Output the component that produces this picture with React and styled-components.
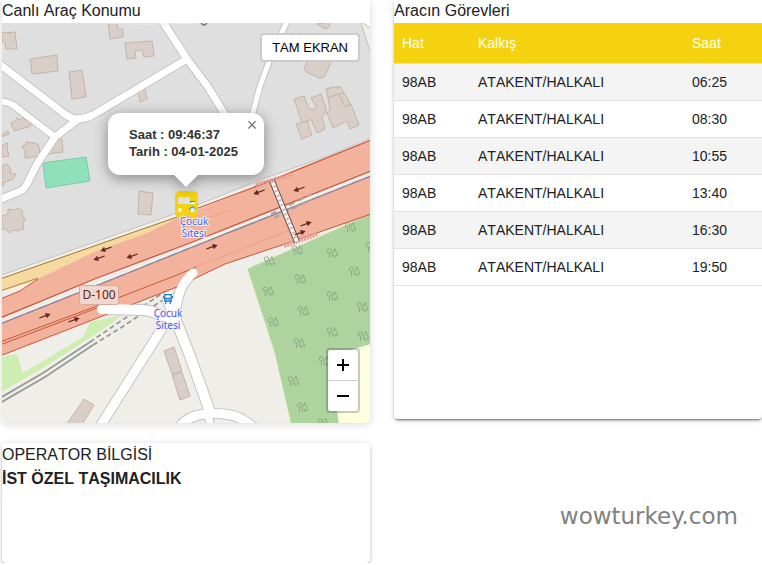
import React, { useState } from "react";
import styled, { createGlobalStyle } from "styled-components";

const GlobalStyle = createGlobalStyle`
  * { box-sizing: border-box; }
  body {
    margin: 0;
    background: #fff;
    color: #212121;
    font-family: "Liberation Sans", Arial, sans-serif;
    font-size: 16px;
  }
`;

const Page = styled.main`
  display: grid;
  grid-template-columns: 1fr 1fr;
  column-gap: 24px;
  padding-left: 2px;
  align-items: start;
`;

const Column = styled.div`
  display: flex;
  flex-direction: column;
  gap: 20px;
  min-width: 0;
`;

const Card = styled.section`
  background: #fff;
  border-radius: ${(p) => (p.$top ? "0 0 4px 4px" : "4px")};
  min-height: ${(p) => p.$minHeight || "auto"};
  box-shadow: ${(p) =>
    p.$soft
      ? "0 1px 8px rgba(0, 0, 0, 0.16)"
      : "0 3px 1px -2px rgba(0, 0, 0, 0.25), 0 2px 2px rgba(0, 0, 0, 0.2), 0 1px 6px rgba(0, 0, 0, 0.16)"};
`;

const CardTitle = styled.h2`
  margin: 0;
  padding-bottom: ${(p) => (p.$tall ? "0" : "2px")};
  font-size: 16px;
  font-weight: 400;
  line-height: ${(p) => (p.$tall ? "24px" : "21px")};
  font-kerning: none;
`;

const OperatorName = styled.p`
  margin: 0;
  font-weight: 700;
  line-height: 24px;
  font-kerning: none;
`;

const MapFrame = styled.div`
  position: relative;
  height: 400px;
  overflow: hidden;
  border-radius: 0 0 4px 4px;
  background: #f0eee9;
`;

const MapSvg = styled.svg`
  display: block;
  width: 100%;
  height: 100%;
`;

const FullscreenButton = styled.button`
  position: absolute;
  top: 10px;
  right: 10px;
  padding: 0 10px;
  height: 29px;
  border: 2px solid #ccc;
  border-radius: 4px;
  background: #fff;
  background-clip: padding-box;
  color: #000;
  font: 13px "Liberation Sans", Arial, sans-serif;
  font-kerning: none;
  cursor: pointer;
`;

const ZoomBar = styled.div`
  position: absolute;
  right: 10px;
  bottom: 10px;
  width: 34px;
  border: 2px solid rgba(0, 0, 0, 0.2);
  border-radius: 4px;
  background: #fff;
  background-clip: padding-box;
`;

const ZoomButton = styled.button`
  display: grid;
  place-items: center;
  width: 100%;
  height: ${(p) => (p.$divided ? "31px" : "30px")};
  padding: 0;
  border: 0;
  border-bottom: ${(p) => (p.$divided ? "1px solid #ccc" : "0")};
  background: none;
  color: #000;
  cursor: pointer;
`;

const Popup = styled.div`
  position: absolute;
  left: 50%;
  top: 90px;
  transform: translateX(-50%);
  filter: drop-shadow(0 3px 7px rgba(0, 0, 0, 0.4));
  display: flex;
  flex-direction: column;
  align-items: center;
`;

const PopupBody = styled.div`
  width: 156px;
  padding: 13px 20px 15px 21px;
  border-radius: 12px;
  background: #fff;
  color: #333;
  font-size: 13px;
  font-weight: 700;
  line-height: 17px;
  white-space: nowrap;
`;

const PopupTip = styled.div`
  width: 24px;
  height: 12px;
  background: #fff;
  clip-path: polygon(0 0, 100% 0, 50% 100%);
`;

const CloseButton = styled.button`
  position: absolute;
  top: 0;
  right: 0;
  width: 24px;
  height: 24px;
  padding: 0;
  border: 0;
  background: none;
  color: #757575;
  font: 18px/24px "Liberation Sans", Arial, sans-serif;
  cursor: pointer;
`;

const TaskTable = styled.table`
  width: 100%;
  border-collapse: separate;
  border-spacing: 0;
  table-layout: fixed;
  font-size: 14px;
  font-kerning: none;
`;

const HeadCell = styled.th`
  width: ${(p) => p.$width};
  height: 41px;
  padding: 0 8px;
  background: #f5d20f;
  background-clip: padding-box;
  border-bottom: 1px solid #e0e0e0;
  color: #fff;
  font-weight: 400;
  text-align: left;
`;

const TaskRow = styled.tr`
  &:nth-child(odd) { background: #f4f4f4; }
`;

const Cell = styled.td`
  height: 37px;
  padding: 0 8px;
  border-bottom: 1px solid #e0e0e0;
`;

const Watermark = styled.p`
  margin: 61px 24px 0 0;
  align-self: flex-end;
  color: #808080;
  font: 23px/32px "DejaVu Sans", Verdana, sans-serif;
`;

const roads = [
  { w: 7, d: "M-4 61L2 66L62 112Q70 119 77 119Q85 119 93 115L187 59L163 22M187 59L208 87L227 118" },
  { w: 6, d: "M-2 101Q8 102 13 105L55 137" },
  { w: 7, d: "M77 120L55 137L37 164L27 184Q24 190 18 192L-2 200" },
  { w: 5, d: "M287 22L273 51L260 86L252 116" },
  { w: 6, d: "M365 20L372 25" },
  { w: 10, d: "M102 309L143 310Q158 311 170 322" },
  { w: 9, d: "M193 273Q181 284 178 298Q176 315 163 327L99 428" },
  { w: 10, d: "M168 300L190 356L210 412" },
  { w: 9, d: "M178 430Q184 417 204 414Q228 412 242 419L258 430" },
  { w: 7, d: "M207 412L212 430" },
];

const buildings = [
  "M2 33L15 32L17 49L6 49L5 42L2 42Z",
  "M30 59L57 55L58 71L32 74Z",
  "M69 72L82 70L86 97L72 99Z",
  "M108 22L117 22L118 29L123 29L123 37L110 39Z",
  "M125 43L152 41L154 56L144 57L142 50L135 51L136 58L127 59Z",
  "M138 91L145 89L147 99L140 102Z",
  "M11 123L17 120L17 117L20 120L23 117L25 120L29 119L31 126L14 131Z",
  "M2 134L8 131L9 134L2 137Z",
  "M2 145L8 143L7 148L9 156L2 157Z",
  "M22 146L26 145L26 142L36 143L39 146L40 156L25 158L25 151Z",
  "M48 143L62 139L63 152L48 154Z",
  "M2 166L7 164L11 169L10 173L16 174L13 179L5 182L3 186L2 186Z",
  "M2 216L8 214L8 209L15 210L18 208L23 211L22 215L25 219L23 224L24 229L17 231L12 230L10 233L5 229L2 229Z",
  "M139 191L153 193L151 215L138 214Z",
  "M317 24L330 22L329 27L325 29Z",
  "M308 60L332 60L325 76Q323 79 319 78L308 73Q303 70 305 67Z",
  "M294 99L304 96L309 109L315 109L316 106L311 98L321 94L326 108L326 113L322 117L325 129L317 133L311 119L308 122L302 123Z",
  "M296 124L307 121L312 135L302 139Z",
  "M326 89Q333 86 341 87L344 93L328 98Z",
  "M328 98L339 94L345 107L351 104L359 125L350 129L347 121L333 128L327 113L330 109Z",
  "M339 94L344 93Q348 98 350 104L345 107Z",
  "M164 351L174 347L182 371L172 374Z",
  "M172 375L182 372L190 396L180 400Z",
  "M84 399L94 405L82 425L66 425Z",
];

const trees = [
  [268, 291], [300, 279], [332, 296], [362, 307], [303, 311], [273, 322], [332, 332],
  [363, 336], [299, 343], [324, 361], [293, 381], [302, 407], [323, 423],
  [269, 261], [297, 250], [332, 253], [350, 227], [354, 271], [371, 247],
];

const arrows = [
  [106, 249, 160], [99, 258, 160], [132, 256, 160], [259, 192, 160], [299, 189, 160],
  [212, 247, -20], [306, 224, -20], [300, 233, -20], [45, 316, -20], [74, 320, -20],
];

function MapDrawing() {
  return (
    <MapSvg viewBox="2 23 368 400" preserveAspectRatio="xMidYMid slice" role="img" aria-label="Harita">
      <path d="M-4 18H376V136L325 157L265 178L177 213L-4 277Z" fill="#dfdfdf" stroke="#c3c3c3" />
      <path d="M360 20H376V70Z" fill="#efede6" stroke="#c0c0b8" />
      <path d="M43 163L86 157L90 181L46 188Z" fill="#8fe0bb" stroke="#74cfa4" />
      <path d="M-2 358L17 354L23 373L83 337L90 322L122 315L108 326L43 368L-2 394Z" fill="#cdeeb0" />
      <path d="M248 269L374 213V426H292L275 352Z" fill="#add49f" stroke="#b9d98f" />
      <path d="M374 343L350 350L332 366L339 426H374Z" fill="#fdfddf" />

      <g fill="none" stroke="#8b9f81" strokeWidth="1">
        {trees.map(([x, y]) => (
          <g key={`${x}-${y}`} opacity="0.8" transform={`translate(${x - 5} ${y - 5})`}>
            <circle cx="2.5" cy="3" r="2.2" />
            <path d="M2.5 5V10M7.8 0.5L4.8 8H10.8ZM7.8 8V10" />
          </g>
        ))}
      </g>

      <g fill="#d9cfc8" stroke="#c4b4a8" strokeWidth="1">
        {buildings.map((d) => <path key={d} d={d} />)}
      </g>

      <g fill="none" stroke="#999" strokeWidth="1.8">
        <path d="M0 398L43 373L90 342M0 403L45 377L93 345" />
        <path d="M90 342L118 323L176 284M93 345L122 327L178 290" strokeDasharray="5 3" />
      </g>

      <g fill="none" stroke="#c4c4c4" strokeLinecap="round" strokeLinejoin="round">
        {roads.map((r) => <path key={r.d} d={r.d} strokeWidth={r.w + 2} />)}
      </g>

      <path d="M0 279L177 217L178 222L38 280L0 292Z" fill="#f6d9a1" />
      <path d="M0 279L177 217" stroke="#9d7a26" fill="none" />
      <path d="M0 291L38 278" stroke="#a98b3a" fill="none" />
      <path d="M0 299L20 291L38 279L92 253L150 232L177 218L252 188L371 140V171L190 243L97 278L0 318Z" fill="#f3b29c" />
      <path d="M0 324L123 275L185 250L371 176V215L225 264L177 287L100 317L0 356Z" fill="#f3b29c" />
      <g fill="none" stroke="#c9563b" strokeWidth="1.3">
        <path d="M177 216L252 188L371 140" />
        <path d="M0 299L20 291L38 279" strokeWidth="1" />
        <path d="M0 318L97 278L190 243L371 171" />
        <path d="M0 356L100 317L177 287L225 264L288 243L371 214" strokeWidth="1" />
        <path d="M0 342L97 306L177 275L196 267" strokeWidth="1" />
        <path d="M0 345L97 308" strokeWidth="1" />
        <path d="M196 267L290 230" strokeWidth="1" opacity="0.2" />
        <path d="M190 225L230 210" strokeWidth="1" opacity="0.2" />
      </g>
      <path d="M0 324L123 275L185 250L371 176" fill="none" stroke="#9c7480" strokeWidth="1.2" />
      <path d="M0 324L123 275L185 250L371 176" fill="none" stroke="#8e8dab" strokeWidth="1.4" strokeDasharray="8 6" />
      <path d="M271 214L312 194M274 218L310 200" stroke="#aaa49f" strokeWidth="2" strokeDasharray="6 4" />

      <g fill="none" stroke="#fff" strokeLinecap="round" strokeLinejoin="round">
        {roads.map((r) => <path key={r.d} d={r.d} strokeWidth={r.w} />)}
      </g>

      <g fill="none">
        <path d="M256 185L293 174M284 246L318 234" stroke="#ee9a91" strokeWidth="4" strokeDasharray="2 1" />
        <path d="M272 181L297 242" stroke="#5c5553" strokeWidth="6" />
        <path d="M272 181L297 242" stroke="#fff" strokeWidth="4" />
        <path d="M272 181L297 242" stroke="#e9a9a0" strokeWidth="3" strokeDasharray="2 3" />
      </g>

      {arrows.map(([x, y, a]) => (
        <path key={`${x}-${y}`} transform={`translate(${x} ${y}) rotate(${a})`}
          d="M-6 -0.6H1V-2.8L6 0L1 2.8V0.6H-6Z" fill="#602a20" />
      ))}

      <rect x="79.500" y="285.500" width="39" height="19" rx="2" fill="#f0d6cd" stroke="#d5a99c" />
      <text x="99" y="299" textAnchor="middle" fontFamily="Noto Sans, sans-serif" fontSize="12" fill="#5e241b">D-100</text>

      <path d="M100 23Q150 26 200 23" stroke="#e8e8e8" strokeWidth="1" fill="none" />
      <path d="M201 23Q204 27 207 23" stroke="#777" strokeWidth="1.3" fill="none" />

      <g fill="none" stroke="#1f7fd4" strokeWidth="1.3">
        <path d="M164.700 301V294.700H171.300V301ZM164.700 298.500H171.300M165.800 301V304M170.200 301V304" />
        <path d="M163.500 296V298M172.500 296V298" strokeWidth="1" />
        <path d="M166 299.800H170" strokeWidth="1" strokeDasharray="1 2" />
      </g>

      <path fill="#f5d20f" d="M180 191H193Q198 191 198 197V215H195V219H191V215H182V218H178V215H175V197Q175 191 180 191Z" />
      <path fill="#e3e1da" d="M178 197H190V204H178Z" />
      <path fill="#fff" d="M190 201H195V204H190Z" />
      <path fill="#2d89c7" d="M190 201H195V202H191V203H190Z" />
      <circle cx="180" cy="210" r="2" fill="#f3efe3" />
      <circle cx="192.500" cy="210" r="2.500" fill="#dceaf0" />
      <path d="M190 210A2.500 2.500 0 0 1 195 209" stroke="#2d89c7" fill="none" />

      <g fontFamily="Noto Sans, sans-serif" fontSize="10" textAnchor="middle" fill="#4b63e0"
        stroke="#f5eff2" strokeWidth="2" strokeLinejoin="round" paintOrder="stroke">
        <text><tspan x="194" y="225">Çocuk</tspan><tspan x="194" dy="12">Sitesi</tspan></text>
        <text><tspan x="168" y="317">Çocuk</tspan><tspan x="168" dy="12">Sitesi</tspan></text>
      </g>
    </MapSvg>
  );
}

const tasks = ["06:25", "08:30", "10:55", "13:40", "16:30", "19:50"];

export default function App() {
  const [popupOpen, setPopupOpen] = useState(true);
  return (
    <>
      <GlobalStyle />
      <Page>
        <Column>
          <Card $top $soft>
            <CardTitle>Canlı Araç Konumu</CardTitle>
            <MapFrame>
              <MapDrawing />
              {popupOpen && (
                <Popup>
                  <PopupBody>
                    <div>Saat : 09:46:37</div>
                    <div>Tarih : 04-01-2025</div>
                  </PopupBody>
                  <PopupTip />
                  <CloseButton aria-label="Kapat" onClick={() => setPopupOpen(false)}>×</CloseButton>
                </Popup>
              )}
              <FullscreenButton>TAM EKRAN</FullscreenButton>
              <ZoomBar>
                <ZoomButton $divided aria-label="Yakınlaştır">
                  <svg width="12" height="12" viewBox="0 0 12 12"><path d="M0 6H12M6 0V12" stroke="#000" strokeWidth="2" /></svg>
                </ZoomButton>
                <ZoomButton aria-label="Uzaklaştır">
                  <svg width="12" height="12" viewBox="0 0 12 12"><path d="M0 6H12" stroke="#000" strokeWidth="2" /></svg>
                </ZoomButton>
              </ZoomBar>
            </MapFrame>
          </Card>
          <Card $minHeight="120px">
            <CardTitle $tall>OPERATOR BİLGİSİ</CardTitle>
            <OperatorName>İST ÖZEL TAŞIMACILIK</OperatorName>
          </Card>
        </Column>
        <Column>
          <Card $top $minHeight="419px">
            <CardTitle>Aracın Görevleri</CardTitle>
            <TaskTable>
              <thead>
                <tr>
                  <HeadCell $width="76px">Hat</HeadCell>
                  <HeadCell $width="auto">Kalkış</HeadCell>
                  <HeadCell $width="78px">Saat</HeadCell>
                </tr>
              </thead>
              <tbody>
                {tasks.map((time) => (
                  <TaskRow key={time}>
                    <Cell>98AB</Cell>
                    <Cell>ATAKENT/HALKALI</Cell>
                    <Cell>{time}</Cell>
                  </TaskRow>
                ))}
              </tbody>
            </TaskTable>
          </Card>
          <Watermark>wowturkey.com</Watermark>
        </Column>
      </Page>
    </>
  );
}
